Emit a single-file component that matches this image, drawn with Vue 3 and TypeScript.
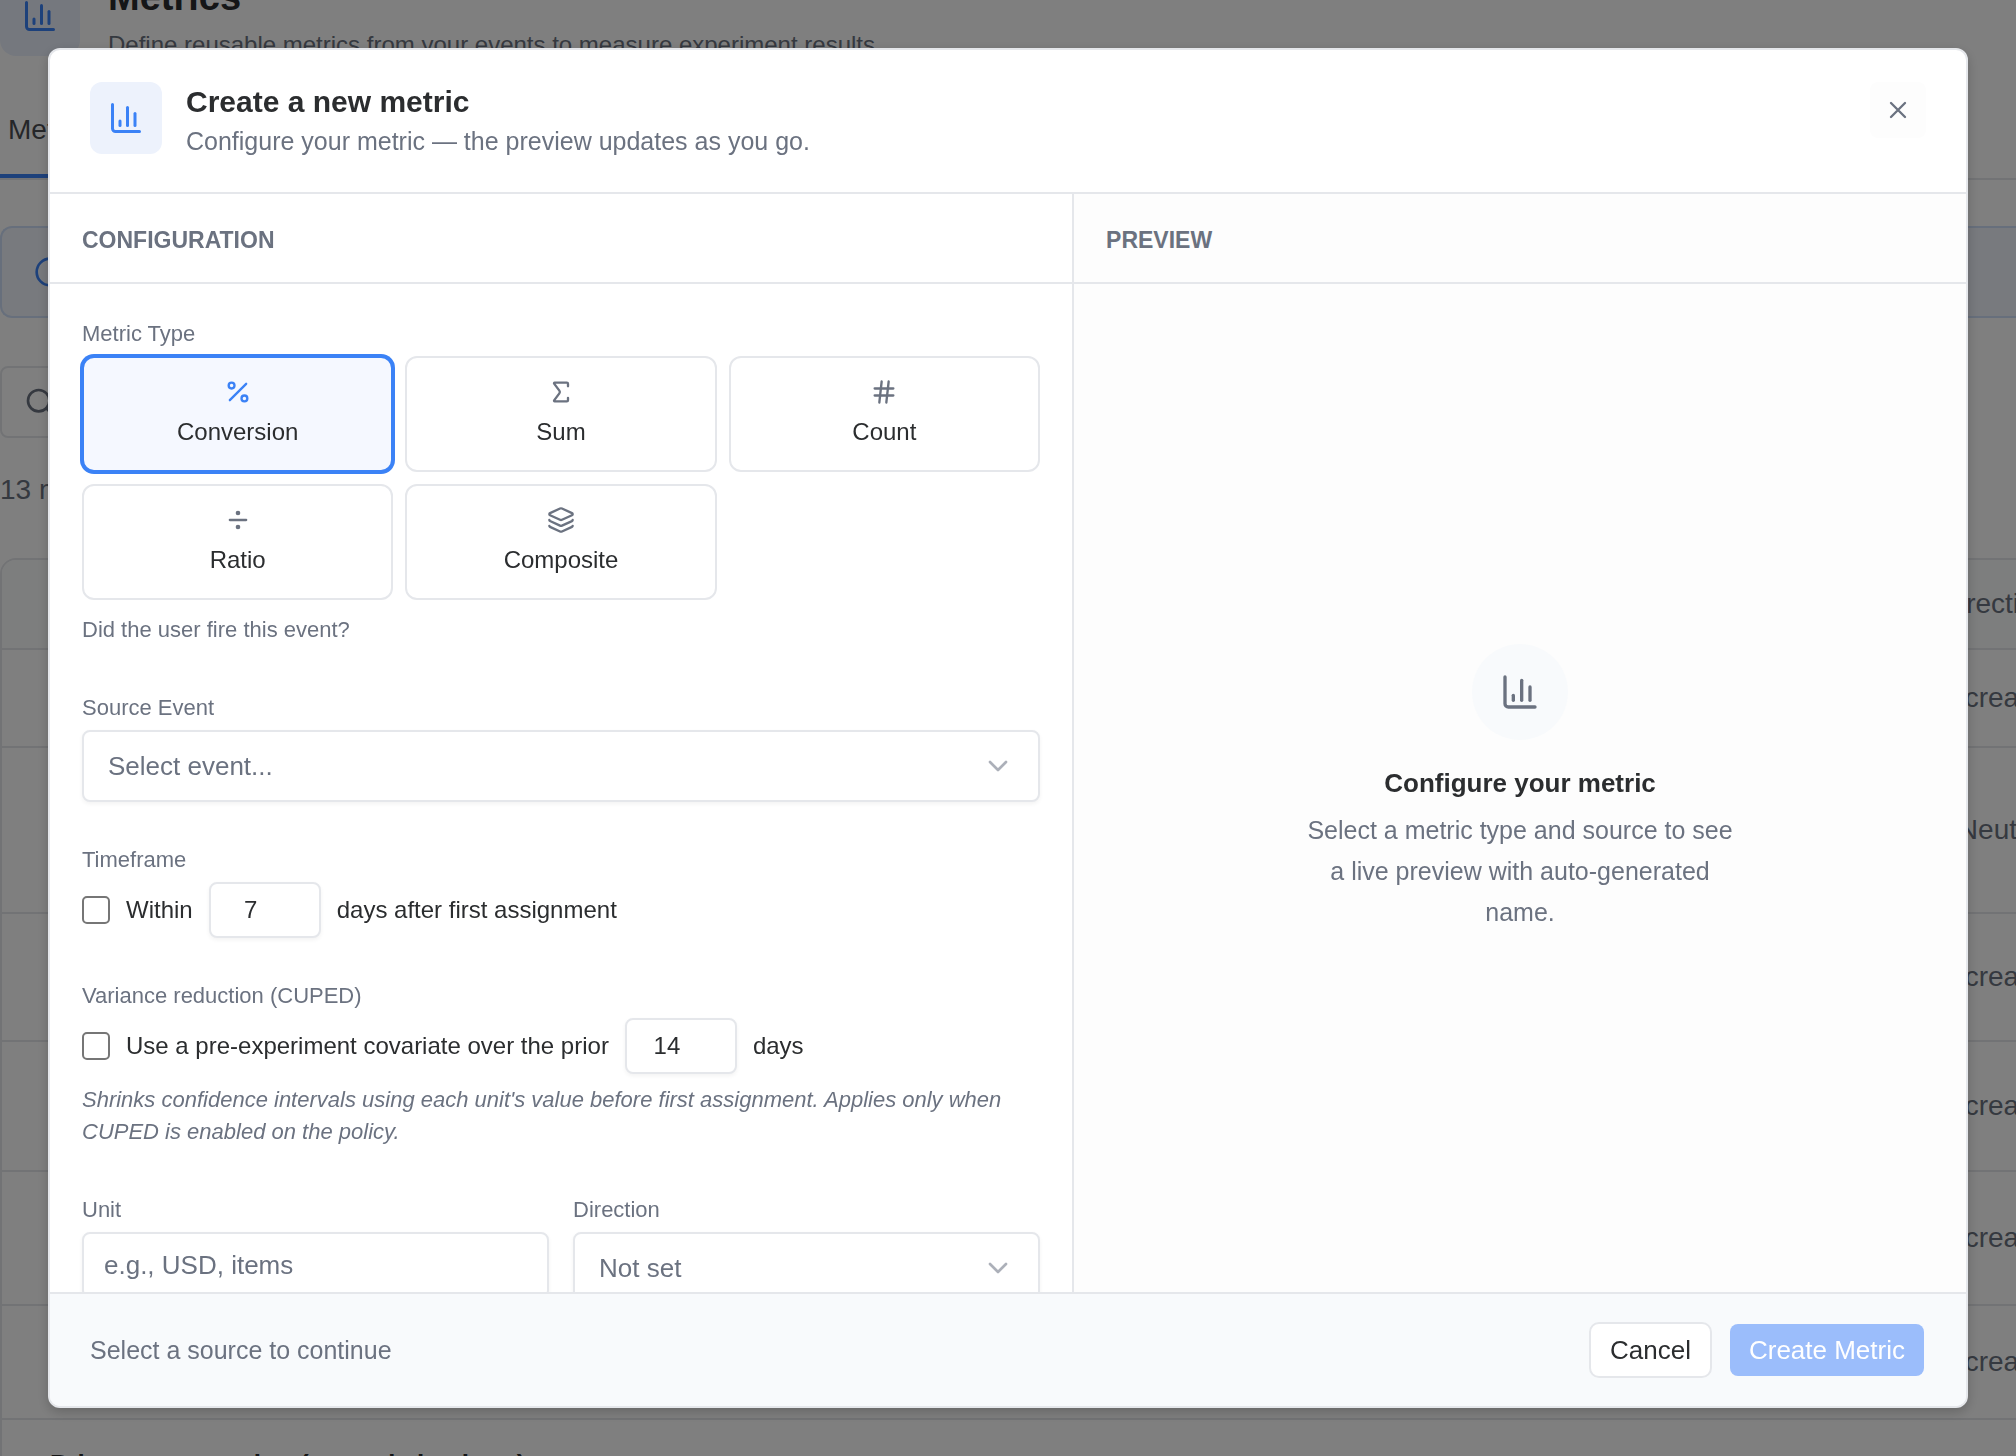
<script setup lang="ts">
import { ref } from 'vue'

interface MetricType {
  id: string
  label: string
  paths: string[]
  circles?: [number, number, number][]
}

interface MetricRow {
  name: string
  direction: string
  height: number
}

const metricTypes: MetricType[] = [
  {
    id: 'conversion',
    label: 'Conversion',
    paths: ['M19 5 5 19'],
    circles: [[6.5, 6.5, 2.5], [17.5, 17.5, 2.5]],
  },
  {
    id: 'sum',
    label: 'Sum',
    paths: ['M18 7V5a1 1 0 0 0-1-1H6.5a.5.5 0 0 0-.4.8l4.5 6a2 2 0 0 1 0 2.4l-4.5 6a.5.5 0 0 0 .4.8H17a1 1 0 0 0 1-1v-2'],
  },
  { id: 'count', label: 'Count', paths: ['M4 9h16', 'M4 15h16', 'M10 3 8 21', 'M16 3l-2 18'] },
  { id: 'ratio', label: 'Ratio', paths: ['M5 12h14'], circles: [[12, 6, 1], [12, 18, 1]] },
  {
    id: 'composite',
    label: 'Composite',
    paths: [
      'M12.83 2.18a2 2 0 0 0-1.66 0L2.6 6.08a1 1 0 0 0 0 1.83l8.58 3.91a2 2 0 0 0 1.66 0l8.58-3.9a1 1 0 0 0 0-1.83z',
      'M2 12a1 1 0 0 0 .58.91l8.6 3.91a2 2 0 0 0 1.65 0l8.58-3.9A1 1 0 0 0 22 12',
      'M2 17a1 1 0 0 0 .58.91l8.6 3.91a2 2 0 0 0 1.65 0l8.58-3.9A1 1 0 0 0 22 17',
    ],
  },
]

const chartPaths = ['M3 3v16a2 2 0 0 0 2 2h16', 'M18 17V9', 'M13 17V5', 'M8 17v-3']

const rows: MetricRow[] = [
  { name: '', direction: 'Increase', height: 98 },
  { name: '', direction: 'Neutral', height: 166 },
  { name: '', direction: 'Increase', height: 128 },
  { name: '', direction: 'Increase', height: 130 },
  { name: '', direction: 'Increase', height: 134 },
  { name: '', direction: 'Increase', height: 114 },
  { name: 'Primary conversion (started checkout)', direction: '', height: 90 },
]

const selectedType = ref('conversion')
const sourceEvent = ref('')
const timeframeOn = ref(false)
const timeframeDays = ref(7)
const cupedOn = ref(false)
const cupedDays = ref(14)
const unit = ref('')
const direction = ref('')
</script>

<template>
  <div class="page">
    <div class="page-inner" aria-hidden="true">
      <header class="page-head">
        <span class="page-badge">
          <svg class="icon-36" viewBox="0 0 24 24"><path v-for="d in chartPaths" :key="d" :d="d" /></svg>
        </span>
        <div>
          <h1>Metrics</h1>
          <p>Define reusable metrics from your events to measure experiment results.</p>
        </div>
      </header>
      <nav class="tabs"><a href="#" class="tab">Metrics</a></nav>
      <div class="banner">
        <svg class="icon-32" viewBox="0 0 24 24"><circle cx="12" cy="12" r="10" /><path d="M12 16v-4M12 8h.01" /></svg>
      </div>
      <div class="search">
        <svg class="icon-32" viewBox="0 0 24 24"><circle cx="11" cy="11" r="8" /><path d="m21 21-4.3-4.3" /></svg>
      </div>
      <p class="total">13 metrics</p>
      <div class="table-wrap">
        <table>
          <thead>
            <tr><th></th><th class="dir">Direction</th></tr>
          </thead>
          <tbody>
            <tr v-for="(row, i) in rows" :key="i" :style="{ height: row.height + 'px' }">
              <td class="name">{{ row.name }}</td>
              <td class="dir" :class="{ neutral: row.direction === 'Neutral' }">{{ row.direction }}</td>
            </tr>
          </tbody>
        </table>
      </div>
    </div>

    <div class="overlay">
      <section class="modal" role="dialog" aria-labelledby="modal-title">
        <header class="modal-head">
          <span class="badge">
            <svg class="icon-36" viewBox="0 0 24 24"><path v-for="d in chartPaths" :key="d" :d="d" /></svg>
          </span>
          <div class="modal-titles">
            <h2 id="modal-title">Create a new metric</h2>
            <p>Configure your metric — the preview updates as you go.</p>
          </div>
          <button class="close" type="button" aria-label="Close">
            <svg viewBox="0 0 24 24"><path d="M18 6 6 18M6 6l12 12" /></svg>
          </button>
        </header>

        <div class="columns">
          <div class="config">
            <h3 class="section-head">Configuration</h3>
            <form class="form" @submit.prevent>
              <div class="field">
                <span id="type-label" class="label">Metric Type</span>
                <div class="types" role="group" aria-labelledby="type-label">
                  <button
                    v-for="t in metricTypes"
                    :key="t.id"
                    type="button"
                    class="type"
                    :class="{ selected: selectedType === t.id }"
                    :aria-pressed="selectedType === t.id"
                    @click="selectedType = t.id"
                  >
                    <svg viewBox="0 0 24 24">
                      <path v-for="d in t.paths" :key="d" :d="d" />
                      <circle v-for="(c, i) in t.circles ?? []" :key="i" :cx="c[0]" :cy="c[1]" :r="c[2]" />
                    </svg>
                    <span>{{ t.label }}</span>
                  </button>
                </div>
                <p class="hint">Did the user fire this event?</p>
              </div>

              <div class="field">
                <label class="label" for="source">Source Event</label>
                <div class="select">
                  <select id="source" v-model="sourceEvent">
                    <option value="">Select event...</option>
                  </select>
                  <svg class="icon-32" viewBox="0 0 24 24"><path d="m6 9 6 6 6-6" /></svg>
                </div>
              </div>

              <div class="field">
                <span class="label">Timeframe</span>
                <div class="inline">
                  <input id="timeframe" v-model="timeframeOn" type="checkbox" />
                  <label for="timeframe">Within</label>
                  <input id="timeframe-days" v-model="timeframeDays" class="days" type="number" />
                  <label for="timeframe-days">days after first assignment</label>
                </div>
              </div>

              <div class="field">
                <span class="label">Variance reduction (CUPED)</span>
                <div class="inline">
                  <input id="cuped" v-model="cupedOn" type="checkbox" />
                  <label for="cuped">Use a pre-experiment covariate over the prior</label>
                  <input id="cuped-days" v-model="cupedDays" class="days" type="number" />
                  <label for="cuped-days">days</label>
                </div>
                <p class="hint italic">
                  Shrinks confidence intervals using each unit's value before first assignment. Applies only when CUPED is
                  enabled on the policy.
                </p>
              </div>

              <div class="pair">
                <div class="field">
                  <label class="label" for="unit">Unit</label>
                  <input id="unit" v-model="unit" class="text" type="text" placeholder="e.g., USD, items" />
                </div>
                <div class="field">
                  <label class="label" for="direction">Direction</label>
                  <div class="select">
                    <select id="direction" v-model="direction">
                      <option value="">Not set</option>
                    </select>
                    <svg class="icon-32" viewBox="0 0 24 24"><path d="m6 9 6 6 6-6" /></svg>
                  </div>
                </div>
              </div>
            </form>
          </div>

          <div class="preview">
            <h3 class="section-head">Preview</h3>
            <div class="empty">
              <span class="empty-icon">
                <svg viewBox="0 0 24 24"><path v-for="d in chartPaths" :key="d" :d="d" /></svg>
              </span>
              <h4>Configure your metric</h4>
              <p>Select a metric type and source to see a live preview with auto-generated name.</p>
            </div>
          </div>
        </div>

        <footer class="modal-foot">
          <p>Select a source to continue</p>
          <button class="btn cancel" type="button">Cancel</button>
          <button class="btn create" type="button" disabled>Create Metric</button>
        </footer>
      </section>
    </div>
  </div>
</template>

<style>
body {
  background: #fff;
}
</style>

<style scoped>
* {
  box-sizing: border-box;
}

.page {
  height: 100vh;
  overflow: hidden;
  font-family: 'Liberation Sans', Arial, sans-serif;
  font-size: 24px;
  color: #2b2d2f;
}

h1, h2, h3, h4, p {
  margin: 0;
}

button, input, select {
  font-family: inherit;
  color: inherit;
}

svg {
  display: block;
  flex: none;
  fill: none;
  stroke: currentColor;
  stroke-width: 2;
  stroke-linecap: round;
  stroke-linejoin: round;
}

.icon-36 {
  width: 36px;
  height: 36px;
}

.icon-32 {
  width: 32px;
  height: 32px;
}

/* Page behind the dialog, scrolled a little */
.page-inner {
  margin-top: -24px;
  font-size: 28px;
}

.page-head {
  display: flex;
  gap: 28px;
  height: 94px;
}

.page-badge {
  display: flex;
  align-items: center;
  justify-content: center;
  width: 80px;
  height: 80px;
  border-radius: 16px;
  background: #ebf1fd;
  color: #3b82f6;
}

.page-head h1 {
  font-size: 38px;
  line-height: 42px;
}

.page-head p {
  font-size: 24px;
  line-height: 54px;
  color: #6b7280;
}

.tabs {
  display: flex;
  margin-top: 40px;
  border-bottom: 2px solid #e5e7eb;
}

.tab {
  padding: 0 8px 24px;
  border-bottom: 4px solid #3b82f6;
  line-height: 40px;
  color: #4b4d52;
  text-decoration: none;
}

.banner {
  display: flex;
  align-items: center;
  height: 92px;
  margin-top: 46px;
  padding-left: 32px;
  border: 2px solid #cfdff8;
  border-right: 0;
  border-radius: 12px 0 0 12px;
  background: #f1f5fd;
  color: #3b82f6;
}

.search {
  display: flex;
  align-items: center;
  width: 600px;
  height: 72px;
  margin-top: 48px;
  padding-left: 22px;
  border: 2px solid #e5e7eb;
  border-radius: 8px;
  color: #6b7280;
}

.total {
  margin-top: 32px;
  line-height: 40px;
  color: #6b7280;
}

.table-wrap {
  margin-top: 48px;
  margin-right: -56px;
  overflow: hidden;
  border: 2px solid #e5e7eb;
  border-radius: 16px;
}

table {
  width: 100%;
  table-layout: fixed;
  border-spacing: 0;
  color: #6b7280;
}

thead tr {
  height: 90px;
  background: #fbfcfd;
}

th, td {
  padding: 0;
  border-bottom: 2px solid #e5e7eb;
  font-weight: 400;
  line-height: 40px;
}

.dir {
  width: 150px;
  text-align: center;
}

.neutral {
  padding-left: 16px;
}

.name {
  padding-left: 48px;
  font-size: 26px;
  font-weight: 700;
  color: #2b2d2f;
}

/* Dialog */
.overlay {
  position: fixed;
  inset: 0;
  display: flex;
  padding: 48px;
  background: rgba(0, 0, 0, 0.5);
}

.modal {
  display: flex;
  flex: 1;
  flex-direction: column;
  min-width: 0;
  overflow: hidden;
  border: 2px solid #e5e7eb;
  border-radius: 12px;
  background: #fff;
  box-shadow: 0 4px 12px rgba(0, 0, 0, 0.2);
}

.modal-head {
  display: flex;
  align-items: flex-start;
  gap: 24px;
  padding: 32px 40px;
  border-bottom: 2px solid #e5e7eb;
}

.badge {
  display: flex;
  align-items: center;
  justify-content: center;
  width: 72px;
  height: 72px;
  border-radius: 12px;
  background: #edf2fc;
  color: #3b82f6;
}

.modal-titles {
  flex: 1;
}

.modal-titles h2 {
  font-size: 30px;
  line-height: 40px;
}

.modal-titles p {
  font-size: 25px;
  line-height: 38px;
  color: #6b7280;
}

.close {
  display: flex;
  align-items: center;
  justify-content: center;
  width: 56px;
  height: 56px;
  padding: 0;
  border: 0;
  border-radius: 8px;
  background: #fdfdfd;
  color: #6b7280;
}

.close svg {
  width: 28px;
  height: 28px;
}

.columns {
  display: grid;
  flex: 1;
  grid-template-columns: 31fr 27fr;
  min-height: 0;
}

.config,
.preview {
  display: flex;
  flex-direction: column;
  min-width: 0;
  min-height: 0;
}

.config {
  border-right: 2px solid #e5e7eb;
}

.preview {
  background: #fdfdfd;
}

.section-head {
  flex: none;
  padding: 30px 32px 26px;
  border-bottom: 2px solid #e5e7eb;
  font-size: 23px;
  line-height: 32px;
  text-transform: uppercase;
  color: #6b7280;
}

.form {
  display: flex;
  flex: 1;
  flex-direction: column;
  gap: 44px;
  min-height: 0;
  padding: 36px 32px;
  overflow-y: auto;
  scrollbar-width: none;
}

.field {
  display: flex;
  flex-direction: column;
  flex: none;
}

.label {
  margin-bottom: 8px;
  font-size: 22px;
  line-height: 28px;
  color: #6b7280;
}

.types {
  display: grid;
  grid-template-columns: repeat(3, 1fr);
  gap: 12px;
  margin-bottom: 4px;
}

.type {
  display: flex;
  flex-direction: column;
  align-items: center;
  gap: 8px;
  padding: 20px;
  border: 2px solid #e5e7eb;
  border-radius: 12px;
  background: #fff;
  font-size: 24px;
  line-height: 36px;
}

.type svg {
  width: 28px;
  height: 28px;
  color: #6b7280;
}

.type.selected {
  border-color: #3b82f6;
  background: #f5f8ff;
  box-shadow: 0 0 0 2px #3b82f6;
}

.type.selected svg {
  color: #3b82f6;
}

.hint {
  margin: 10px 0 4px;
  font-size: 22px;
  line-height: 32px;
  color: #6b7280;
}

.italic {
  font-style: italic;
}

.select {
  display: grid;
  align-items: center;
}

.select select,
.select svg {
  grid-area: 1 / 1;
}

.select select {
  width: 100%;
  height: 72px;
  padding: 0 64px 0 24px;
  appearance: none;
}

.select svg {
  justify-self: end;
  margin-right: 26px;
  color: #acb0b9;
  pointer-events: none;
}

.select select,
.text,
.days {
  border: 2px solid #e5e7eb;
  border-radius: 8px;
  background: #fff;
  box-shadow: 0 2px 4px rgba(0, 0, 0, 0.05);
  font-size: 26px;
}

.select select {
  color: #6b7280;
}

.text {
  width: 100%;
  height: 66px;
  padding: 0 20px;
}

.text::placeholder {
  color: #6b7280;
  opacity: 1;
}

.inline {
  display: flex;
  align-items: center;
  gap: 16px;
}

.inline input[type='checkbox'] {
  flex: none;
  width: 28px;
  height: 28px;
  margin: 0;
  border: 2px solid #767676;
  border-radius: 5px;
  background: #fff;
  appearance: none;
}

.inline input[type='checkbox']:checked {
  background: #3b82f6;
}

.days {
  width: 112px;
  height: 56px;
  padding: 0 40px 0 12px;
  font-size: 24px;
  text-align: center;
  appearance: textfield;
}

.days::-webkit-inner-spin-button {
  display: none;
}

.pair {
  display: grid;
  flex: none;
  grid-template-columns: 1fr 1fr;
  gap: 24px;
}

.empty {
  display: flex;
  flex: 1;
  flex-direction: column;
  align-items: center;
  justify-content: center;
  text-align: center;
}

.empty-icon {
  display: flex;
  align-items: center;
  justify-content: center;
  width: 96px;
  height: 96px;
  margin-bottom: 24px;
  border-radius: 50%;
  background: #f8fafc;
  color: #6b7280;
}

.empty-icon svg {
  width: 40px;
  height: 40px;
}

.empty h4 {
  margin-bottom: 8px;
  font-size: 26px;
  line-height: 38px;
}

.empty p {
  max-width: 440px;
  font-size: 25px;
  line-height: 41px;
  color: #6b7280;
}

.modal-foot {
  display: flex;
  flex: none;
  align-items: center;
  gap: 16px;
  padding: 28px 40px;
  border-top: 2px solid #e5e7eb;
  background: #f8fafc;
}

.modal-foot p {
  flex: 1;
  font-size: 25px;
  color: #6b7280;
}

.btn {
  height: 56px;
  padding: 0 19px;
  border: 2px solid #e5e7eb;
  border-radius: 10px;
  background: #fff;
  font-size: 26px;
}

.create {
  border-color: transparent;
  background: #9bbdfb;
  background-clip: padding-box;
  color: #fff;
}
</style>
